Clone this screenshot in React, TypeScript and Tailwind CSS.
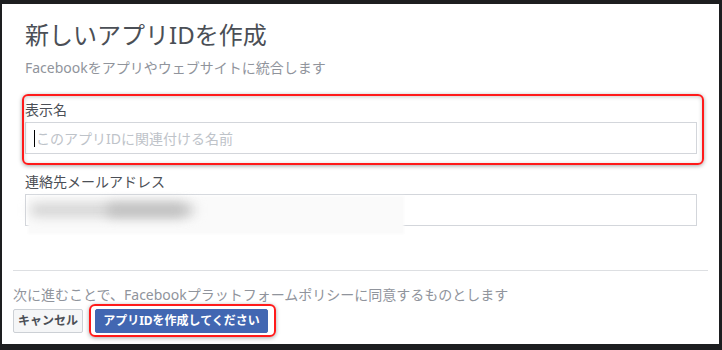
import React from "react";

const font = { fontFamily: '"Noto Sans", "Noto Sans CJK JP", sans-serif' };

export default function App() {
  return (
    <div className="w-[722px] h-[350px] bg-[#1d1e20] pt-[4px] pl-[2px] pr-[3px] overflow-hidden" style={font}>
      <div className="h-[340px] bg-white flex flex-col">
        <div className="pl-[23px] pr-[22px] pt-[16px]">
          <h1 className="text-[24px] leading-[30px] text-[#4b4f56] font-normal">新しいアプリIDを作成</h1>
          <p className="mt-[8px] text-[14px] leading-[20px] text-[#90949c]">Facebookをアプリやウェブサイトに統合します</p>

          <div className="relative mt-[22px]">
            <div className="absolute left-[-3px] right-[-7px] top-[-6px] bottom-[-11px] border-2 border-[#ff1a1a] rounded-[6px] shadow-[0_1px_4px_rgba(0,0,0,0.35),inset_0_1px_4px_rgba(0,0,0,0.2)] pointer-events-none" />
            <label className="block text-[14px] leading-[20px] text-[#4b4f56]">表示名</label>
            <div className="mt-[2px] h-[32px] border border-[#d3d6db] flex items-center pl-[8px]">
              <span className="w-px h-[17px] bg-black mr-[1px]" />
              <span className="text-[14px] text-[#bec3c9]">このアプリIDに関連付ける名前</span>
            </div>
          </div>

          <div className="relative mt-[18px]">
            <label className="block text-[14px] leading-[20px] text-[#4b4f56]">連絡先メールアドレス</label>
            <div className="relative mt-[2px] h-[32px] border border-[#d3d6db]">
              <div className="absolute left-[2px] top-[1px] w-[376px] h-[38px] bg-[#fafafa] blur-[1px]" />
              <div className="absolute left-[4px] top-[9px] w-[165px] h-[12px] rounded-full bg-[#d0d0d0] blur-[6px]" />
              <div className="absolute left-[80px] top-[9px] w-[80px] h-[12px] rounded-full bg-[#bdbdbd] blur-[6px]" />
            </div>
          </div>
        </div>

        <div className="mt-auto px-[11px] pb-[11px]">
          <div className="h-px bg-[#dddfe2]" />
          <p className="mt-[14px] text-[14px] leading-[20px] text-[#90949c]">次に進むことで、Facebookプラットフォームポリシーに同意するものとします</p>
          <div className="mt-[4px] flex items-center gap-[12px]">
            <button className="h-[24px] w-[70px] bg-[#f5f6f7] border border-[#ccd0d5] rounded-[2px] text-[12px] font-bold text-[#4b4f56] flex items-center justify-center">キャンセル</button>
            <div className="relative">
              <div className="absolute left-[-6px] right-[-8px] top-[-5px] bottom-[-4px] border-2 border-[#ff1a1a] rounded-[6px] shadow-[0_1px_4px_rgba(0,0,0,0.35)] pointer-events-none" />
              <button className="h-[24px] w-[173px] bg-[#4267b2] border border-[#4267b2] rounded-[2px] text-[12px] font-bold text-white flex items-center justify-center">アプリIDを作成してください</button>
            </div>
          </div>
        </div>
      </div>
    </div>
  );
}
